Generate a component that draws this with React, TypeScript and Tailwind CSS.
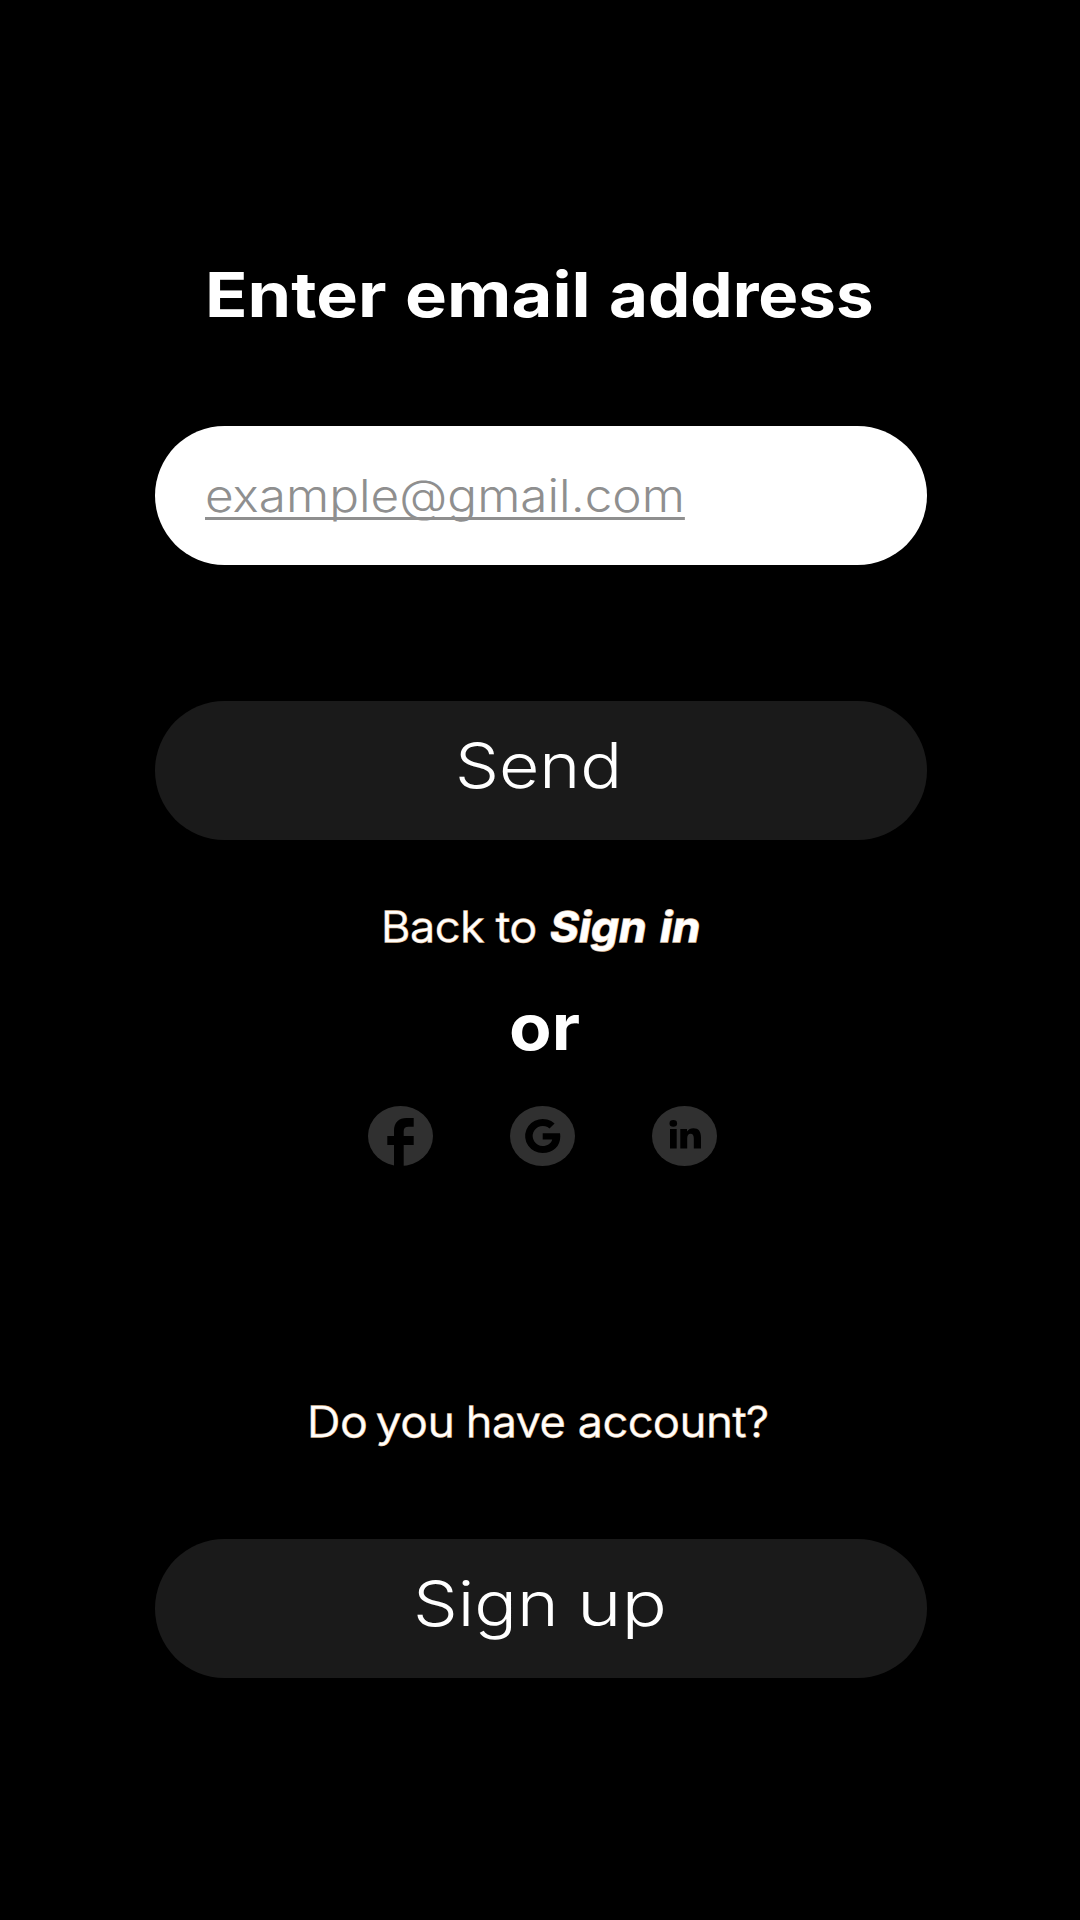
const outlined =
  "[-webkit-text-stroke:1.4px_#e3c3a1] [paint-order:stroke_fill]";

function FacebookIcon() {
  return (
    <svg width="65" height="60" viewBox="0 0 65 60" aria-label="Facebook">
      <ellipse cx="32.5" cy="30" rx="32.5" ry="30" fill="#303030" />
      <path
        d="M26 60V39h-6.7v-9H26v-5.5C26 16.5 31 12 38.500 12h7.200v8.700h-5c-3.500 0-5 1.500-5 4.300v5h10v9h-10v21z"
        fill="#000"
      />
    </svg>
  );
}

function GoogleIcon() {
  return (
    <svg width="65" height="60" viewBox="0 0 65 60" aria-label="Google">
      <ellipse cx="32.5" cy="30" rx="32.5" ry="30" fill="#303030" />
      <path
        d="M44.600 17.600A17.500 17 0 1 0 32.500 47C43.500 47 50.300 40 50.300 30.500 50.300 29.400 50.200 28.300 50 27.300H32.700V33.500H42.200C41.200 37.500 37.500 40 32.500 40A10.200 10 0 1 1 39.500 22.400Z"
        fill="#000"
      />
    </svg>
  );
}

function LinkedinIcon() {
  return (
    <svg width="65" height="60" viewBox="0 0 65 60" aria-label="LinkedIn">
      <ellipse cx="32.5" cy="30" rx="32.5" ry="30" fill="#303030" />
      <ellipse cx="21.300" cy="17.400" rx="3.800" ry="3.300" fill="#000" />
      <path
        d="M18 23h6.700v19.400H18zM28.300 23h6.700v2.600c1.400-2.200 3.700-3.400 6.400-3.400 5.200 0 7.600 3.300 7.600 9v11.200h-7.200V32.500c0-3-1-4.700-3.200-4.700-2.300 0-3.400 1.700-3.400 4.700v9.900h-6.900z"
        fill="#000"
      />
    </svg>
  );
}

export default function App() {
  return (
    <main className="flex h-[1920px] w-[1080px] flex-col overflow-hidden bg-black pt-[265px] font-['Inter',sans-serif] leading-none whitespace-nowrap text-white">
      <h1 className="flex h-[60px] items-center pl-[204.700px] text-[62px] font-bold">
        <span className="w-[200px] origin-left scale-x-[1.13]">Enter</span>
        <span className="w-[204.1px] origin-left scale-x-[1.138]">email</span>
        <span className="origin-left scale-x-[1.083]">address</span>
      </h1>

      <div className="mx-[155px] mt-[101px] flex h-[139px] w-[772px] items-center rounded-full bg-white pl-[50px]">
        <span className="origin-left scale-x-[1.1] text-[45px] font-light text-[#8f8f8f] underline decoration-[2.5px] underline-offset-[5px] [text-decoration-skip-ink:none]">
          example@gmail.com
        </span>
      </div>

      <button className="mx-[155px] mt-[136px] flex h-[139px] w-[772px] items-center rounded-full bg-[#1a1a1a] pb-[11px] pl-[299.5px] text-[63px] font-[330]">
        <span className="origin-left scale-x-[1.105]">Send</span>
      </button>

      <p className={`mt-[62px] flex h-[50px] items-center pl-[381.3px] text-[42px] font-[340] ${outlined}`}>
        <span className="w-[115.2px] origin-left scale-x-[1.075]">Back</span>
        <span className="w-[53.5px] origin-left scale-x-[1.11]">to</span>
        <span className="w-[110.5px] origin-left scale-x-[1.055] font-bold italic">Sign</span>
        <span className="origin-left scale-x-[1.075] font-bold italic">in</span>
      </p>

      <p className="mt-[45px] flex h-[60px] items-center pl-[508.8px] text-[64px] font-bold">
        <span className="origin-left scale-x-[1.086]">or</span>
      </p>

      <div className="mt-[49px] flex h-[60px] gap-[77px] pl-[368px]">
        <FacebookIcon />
        <GoogleIcon />
        <LinkedinIcon />
      </div>

      <p className={`mt-[231px] flex h-[50px] items-center pl-[307.2px] text-[42px] font-[340] ${outlined}`}>
        <span className="w-[68.8px] origin-left scale-x-[1.1]">Do</span>
        <span className="w-[90.5px] origin-left scale-x-[1.09]">you</span>
        <span className="w-[111.5px] origin-left scale-x-[1.06]">have</span>
        <span className="origin-left scale-x-[1.072]">account?</span>
      </p>

      <button className="mx-[155px] mt-[92px] flex h-[139px] w-[772px] items-center rounded-full bg-[#1a1a1a] pb-[11px] pl-[258.3px] text-[63px] font-[330]">
        <span className="w-[163.8px] origin-left scale-x-[1.125] text-left">Sign</span>
        <span className="origin-left scale-x-[1.2]">up</span>
      </button>
    </main>
  );
}
